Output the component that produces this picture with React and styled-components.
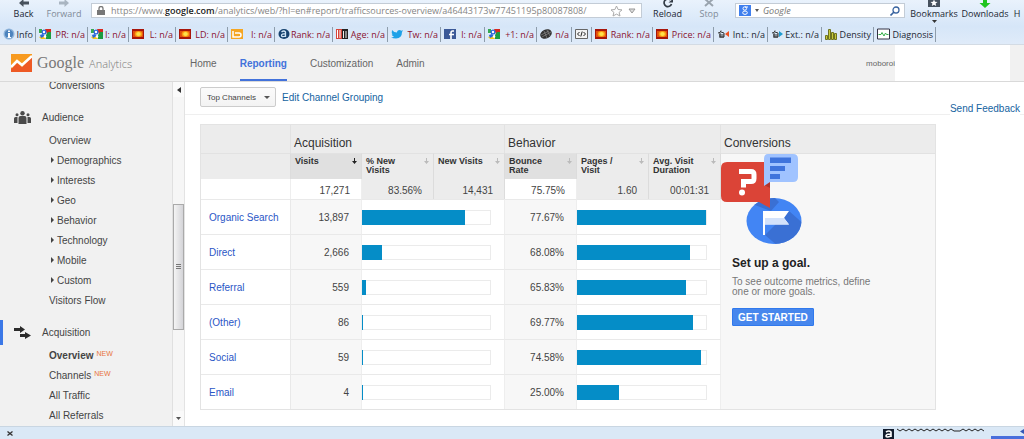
import React from 'react'
import styled, { createGlobalStyle } from 'styled-components'

const GlobalStyle = createGlobalStyle`
    * {
        box-sizing: border-box;
    }
    body {
        margin: 0;
        background: #ffffff;
        font-family: "Liberation Sans", Arial, sans-serif;
        font-size: 10px;
        color: #444444;
    }
    button, input, select {
        font-family: inherit;
        font-size: inherit;
        color: inherit;
        margin: 0;
        padding: 0;
        border: 0;
        background: none;
    }
    a {
        text-decoration: none;
        color: inherit;
    }
    ul {
        list-style: none;
        margin: 0;
        padding: 0;
    }
    svg {
        display: block;
        flex: none;
    }
`

const Page = styled.div`
    display: flex;
    flex-direction: column;
    min-height: 100vh;
    overflow: hidden;
`

/* browser chrome */

const Chrome = styled.div`
    background: linear-gradient(#e9f2fc, #d6e6f8 60%, #dfebf9);
    font-family: "Open Sans", "Noto Sans", sans-serif;
    font-size: 9px;
    color: #1c2733;
    border-bottom: 1px solid #d3dbe4;
`
const BrowserBar = styled.div`
    display: flex;
    align-items: flex-start;
    height: 24px;
    padding-left: 10px;
    overflow: hidden;
`
const BrowserButton = styled.button`
    display: flex;
    flex-direction: column;
    align-items: center;
    flex: none;
    width: ${props => props.$width}px;
    line-height: 12px;
    white-space: nowrap;
    color: ${props => props.$muted ? '#7f8b98' : '#1c2733'};
`
const AddressBox = styled.label`
    position: relative;
    display: flex;
    align-items: center;
    flex: 1;
    min-width: 0;
    height: 15px;
    margin: 3px 10px 0 0;
    padding: 0 5px 0 5px;
    background: #ffffff;
    border: 1px solid #c3ccd6;
`
const AddressText = styled.span`
    flex: 1;
    margin-left: 6px;
    color: #858585;
    line-height: 12px;
    white-space: nowrap;

    b {
        font-weight: 600;
        color: #222222;
    }
`
const AddressInput = styled.input`
    position: absolute;
    inset: 0;
    width: 100%;
    outline: none;
`
const SearchBox = styled.label`
    display: flex;
    align-items: center;
    gap: 4px;
    flex: none;
    width: 170px;
    height: 15px;
    margin: 3px 3px 0 0;
    padding: 0 4px 0 3px;
    background: #ffffff;
    border: 1px solid #c3ccd6;
`
const SearchInput = styled.input`
    flex: 1;
    min-width: 0;
    outline: none;

    &::placeholder {
        font-style: italic;
        color: #777777;
    }
`
const SeoBar = styled.ul`
    display: flex;
    height: 20px;
    align-items: center;
`
const SeoItem = styled.li`
    display: flex;
    align-items: center;
    justify-content: space-between;
    flex: none;
    width: ${props => props.$width}px;
    height: 15px;
    padding: 0 2px 0 3px;
    border-right: 1px solid #8d9cab;
    white-space: nowrap;
    color: ${props => props.$dark ? '#1c2733' : '#8a1230'};
`

/* analytics header */

const Header = styled.header`
    display: flex;
    align-items: stretch;
    height: 37px;
    background: #f1f1f1;
    border-bottom: 1px solid #d9d9d9;
`
const Brand = styled.a`
    display: flex;
    align-items: center;
    width: 178px;
    padding-left: 11px;
    color: #777777;
`
const BrandGoogle = styled.span`
    margin-left: 5px;
    font-family: "Liberation Serif", serif;
    font-size: 16px;
`
const BrandProduct = styled.span`
    margin-left: 5px;
    font-family: "Open Sans", sans-serif;
    font-weight: 300;
    font-size: 11px;
`
const MainNav = styled.nav`
    display: flex;
    flex: 1;
    gap: 23px;
    padding-left: 12px;
`
const NavLink = styled.a`
    display: flex;
    align-items: center;
    font-size: 10px;
    font-weight: ${props => props.$active ? 'bold' : 'normal'};
    color: ${props => props.$active ? '#4272db' : '#666666'};
    border-top: 2px solid transparent;
    border-bottom: 2px solid ${props => props.$active ? '#4272db' : 'transparent'};
`
const Account = styled.div`
    display: flex;
    align-items: center;
    font-size: 8px;
    color: #666666;
`
const AccountPanel = styled.div`
    align-self: stretch;
    width: 115px;
    margin-right: 14px;
    background: #ffffff;
`

/* body */

const Body = styled.div`
    display: flex;
    flex: 1;
`
const Sidebar = styled.nav`
    display: flex;
    width: 185px;
    flex: none;
    background: #f1f1f1;
    overflow: hidden;
    border-right: 1px solid #e3e3e3;
`
const SideList = styled.ul`
    flex: 1;
    margin-top: -7px;
`
const SideHeading = styled.li`
    display: flex;
    align-items: center;
    height: 25px;
    margin-top: 10px;
    padding-left: 11px;
    border-left: 3px solid ${props => props.$active ? '#3b78e7' : 'transparent'};

    svg {
        margin-right: 11px;
    }
`
const SideItem = styled.li`
    display: flex;
    align-items: center;
    height: 20px;
    padding-left: 49px;
    font-weight: ${props => props.$active ? 'bold' : 'normal'};

    svg {
        margin: 0 3px 0 2px;
    }
`
const NewTag = styled.sup`
    margin: 0 0 2px 3px;
    font-size: 7px;
    font-weight: normal;
    line-height: 8px;
    color: #e8743b;
`
const Scrollbar = styled.div`
    display: flex;
    flex-direction: column;
    justify-content: space-between;
    align-items: center;
    width: 12px;
    background: #f6f6f6;
    border-left: 1px solid #e0e0e0;
`
const ScrollButton = styled.button`
    display: flex;
    align-items: center;
    justify-content: center;
    width: 100%;
    height: 15px;
    background: #fafafa;
`
const ScrollTrack = styled.div`
    flex: 1;
    padding-top: 107px;
`
const ScrollThumb = styled.div`
    display: flex;
    align-items: center;
    justify-content: center;
    width: 11px;
    height: 126px;
    border: 1px solid #aaaaaa;
    background: linear-gradient(90deg, #f4f4f4, #d4d4d8);
`
const Main = styled.main`
    flex: 1;
    min-width: 0;
`
const Toolbar = styled.div`
    display: flex;
    align-items: center;
    height: 33px;
    gap: 6px;
    padding: 0 4px 2px 15px;
    border-bottom: 1px solid #efefef;
`
const SelectWrap = styled.label`
    display: flex;
    align-items: center;
    position: relative;

    svg {
        position: absolute;
        right: 6px;
        pointer-events: none;
    }
`
const Select = styled.select`
    appearance: none;
    width: 76px;
    height: 20px;
    padding-left: 6px;
    font-size: 8px;
    border: 1px solid #cccccc;
    border-radius: 2px;
    background: linear-gradient(#fbfbfb, #f3f3f3);
`
const TextLink = styled.a`
    color: #15639f;
`
const FeedbackLink = styled(TextLink)`
    align-self: flex-end;
    margin-left: auto;
    margin-bottom: -4px;
    background: #ffffff;
    line-height: 14px;
`

/* table */

const Report = styled.div`
    margin: 9px 88px 16px 15px;
`
const Table = styled.table`
    width: 100%;
    table-layout: fixed;
    border-collapse: separate;
    border-spacing: 0;
    border: 1px solid #e3e3e3;
`
const GroupCell = styled.th`
    height: 28px;
    padding: 8px 0 0 3px;
    background: #ececec;
    border-right: ${props => props.$divider ? '1px solid #e2e2e2' : '0'};
    text-align: left;
    font-size: 12px;
    line-height: 14px;
    font-weight: normal;
    color: #333333;
`
const HeadCell = styled.th`
    height: 26px;
    padding: 3px 4px 0 4px;
    vertical-align: top;
    text-align: left;
    font-size: 9px;
    line-height: 9px;
    color: #333333;
    background: ${props => props.$sorted ? '#e0e0e0' : '#ececec'};
    border-top: 1px solid #e2e2e2;
    border-right: 1px solid #dcdcdc;
`
const HeadContent = styled.div`
    display: flex;
    justify-content: space-between;
    gap: 10px;
`
const SortButton = styled.button`
    align-self: flex-start;
    padding-top: 1px;
    color: ${props => props.$on ? '#222222' : '#bbbbbb'};
`
const TotalCell = styled.td`
    height: 20px;
    padding: 4px 11px 0 0;
    text-align: right;
    line-height: 12px;
    background: ${props => props.$plain ? '#ffffff' : '#ececec'};
    border-right: 1px solid ${props => props.$plain ? '#eeeeee' : '#dcdcdc'};
`
const Cell = styled.td`
    height: 35px;
    padding: 0 ${props => props.$bar ? 13 : 12}px 0 0;
    text-align: right;
    background: ${props => props.$shade ? '#f7f7f7' : '#ffffff'};
    border-top: 1px solid #e9e9e9;
    border-right: 1px solid #eeeeee;
`
const ChannelCell = styled.th`
    padding: 0 0 0 8px;
    text-align: left;
    font-weight: normal;
    color: #2a56c6;
    border-top: 1px solid #e9e9e9;
    border-right: 1px solid #e9e9e9;
`
const BarTrack = styled.div`
    height: 15px;
    border: 1px solid #ebebeb;
    border-left: 0;
`
const BarFill = styled.div`
    height: 15px;
    min-width: 1px;
    margin-top: -1px;
    background: #058dc7;
`
const GoalCell = styled.td`
    padding: 0;
    vertical-align: top;
    background: #f7f7f7;
    border-top: 1px solid #e2e2e2;
`
const GoalText = styled.div`
    padding: 10px 11px 0;

    h2 {
        margin: 0;
        font-size: 12px;
        line-height: 16px;
        color: #222222;
    }
    p {
        max-width: 150px;
        margin: 6px 0 11px;
        line-height: 10px;
        color: #777777;
    }
`
const StartButton = styled.button`
    height: 18px;
    padding: 0 5px;
    border: 1px solid #3079ed;
    border-radius: 1px;
    background: #4787ed;
    color: #ffffff;
    font-weight: bold;
    white-space: nowrap;
`
const StatusBar = styled.footer`
    display: flex;
    align-items: center;
    justify-content: space-between;
    height: 13px;
    padding-left: 7px;
    background: #dae8f6;
    border-top: 1px solid #c9d6e2;
    overflow: hidden;
`

const SEO_ITEMS = [
    { icon: 'info', text: 'Info', width: 36, dark: true },
    { icon: 'google', text: 'PR: n/a', width: 52 },
    { icon: 'google', text: 'I: n/a', width: 41 },
    { icon: 'sun', text: 'L: n/a', width: 47 },
    { icon: 'sun', text: 'LD: n/a', width: 52 },
    { icon: 'bing', text: 'I: n/a', width: 47 },
    { icon: 'alexa', text: 'Rank: n/a', width: 58 },
    { icon: 'archive', text: 'Age: n/a', width: 55 },
    { icon: 'twitter', text: 'Tw: n/a', width: 53 },
    { icon: 'facebook', text: 'l: n/a', width: 44 },
    { icon: 'google', text: '+1: n/a', width: 52 },
    { icon: 'ball', text: 'n/a', width: 35 },
    { icon: 'code', text: '', width: 20 },
    { icon: 'sun', text: 'Rank: n/a', width: 61 },
    { icon: 'sun', text: 'Price: n/a', width: 61 },
    { icon: 'linkIn', text: 'Int.: n/a', width: 54, dark: true },
    { icon: 'linkOut', text: 'Ext.: n/a', width: 54, dark: true },
    { icon: 'density', text: 'Density', width: 52, dark: true },
    { icon: 'pulse', text: 'Diagnosis', width: 62, dark: true }
]

const HEADINGS = [
    { text: 'Visits', sorted: true, on: true },
    { text: '% New Visits' },
    { text: 'New Visits' },
    { text: 'Bounce Rate', sorted: true },
    { text: 'Pages / Visit' },
    { text: 'Avg. Visit Duration' }
]

const CHANNELS = [
    { name: 'Organic Search', visits: 13897, bounce: 77.67 },
    { name: 'Direct', visits: 2666, bounce: 68.08 },
    { name: 'Referral', visits: 559, bounce: 65.83 },
    { name: '(Other)', visits: 86, bounce: 69.77 },
    { name: 'Social', visits: 59, bounce: 74.58 },
    { name: 'Email', visits: 4, bounce: 25 }
]
const TOTAL_VISITS = 17271
const MAX_BOUNCE = 77.67

const SEO_SHAPES = {
    info: <>
        <circle cx="6" cy="6" r="5.500" fill="#8fb4da" />
        <circle cx="6" cy="6" r="4.200" fill="#4d84be" />
        <path d="M5 5h2v4h1v1H4.500V9H5V6zM5 2.500h2v1.500H5z" fill="#fff" />
    </>,
    google: <>
        <path d="M0 1h6v5H0z" fill="#e9f3ff" />
        <path d="M6 1h6v5H8z" fill="#d8291f" />
        <path d="M9 4h3v7H7V7z" fill="#1c9c41" />
        <path d="M0 1h3v4H0z" fill="#36a852" />
        <path d="M0 9l5-2 2 4H2z" fill="#f5c51f" />
        <path d="M1 7l3-1 2 2-4 2z" fill="#2a66d8" />
        <circle cx="5" cy="4" r="2.500" fill="#2a66d8" />
        <circle cx="5" cy="4" r="1.200" fill="#fff" />
        <circle cx="6" cy="8.500" r="1.300" fill="#fff" />
    </>,
    sun: <>
        <path d="M0 1h12v10H0z" fill="#a8160b" />
        <path d="M1 3h10v6H1z" fill="#e2500f" />
        <ellipse cx="6.500" cy="6" rx="3.800" ry="3" fill="#fb9a12" />
        <ellipse cx="6.500" cy="6" rx="2.300" ry="2" fill="#ffe24a" />
    </>,
    bing: <>
        <path d="M0 1h12v10H0z" fill="#f5a623" />
        <path d="M2 3v6h6a2 2 0 0 0 0-4H4" fill="none" stroke="#fff" strokeWidth="1.500" />
    </>,
    alexa: <>
        <ellipse cx="6" cy="6" rx="5.500" ry="5" fill="#16426f" />
        <path d="M3.500 4q2.500-2 4 0v5M7.500 6q-4-.5-4 1.500t4 .5" fill="none" stroke="#cfe4f5" strokeWidth="1.300" />
    </>,
    archive: <>
        <path d="M0 1h6v10H0z" fill="#d6453a" />
        <path d="M1.500 2v8M4 2v8" stroke="#fff" />
        <path d="M6 1h6v10H6z" fill="#222" />
        <path d="M7.500 3v7M10 3v7" stroke="#eee" />
    </>,
    twitter: <path d="M1 2q2 2.500 5 2.500Q6 2 8.500 2q1 0 1.700.7L12 2.200 11 4q0 6-6 6.500Q2 10.500 0 9.500q2 0 3-1-2-.5-2.300-2h1Q.2 5 1 2z" fill="#1da1e8" />,
    facebook: <>
        <path d="M0 1h12v10H0z" fill="#3b5998" />
        <path d="M10 3H8.500Q7 3 7 5v6M5 6.500h5" fill="none" stroke="#fff" strokeWidth="1.600" />
    </>,
    ball: <>
        <ellipse cx="6" cy="6" rx="6" ry="4.500" transform="rotate(-25 6 6)" fill="#333" />
        <path d="M1 7l8-4M2 9l9-5M4 3l3 7M7 2l3 6" stroke="#999" strokeWidth=".6" />
    </>,
    code: <>
        <path d="M.5 1.500h12v9H.500z" fill="#f3f3f3" stroke="#666" />
        <path d="M4.500 4L2.500 6l2 2M8.500 4l2 2-2 2M7.200 3.500L5.800 8.500" fill="none" stroke="#222" />
    </>,
    linkIn: <>
        <path d="M1 5q3 0 3-2.500M3 5v4h4V5L4 4M2 7h5M2 9h5" fill="none" stroke="#333" />
        <path d="M12 3v6L8 6z" fill="#f0501e" />
    </>,
    linkOut: <>
        <path d="M1 5q3 0 3-2.500M3 5v4h4V5L4 4M2 7h5M2 9h5" fill="none" stroke="#333" />
        <path d="M8 3v6l4-3z" fill="#1e9bd0" />
    </>,
    density: <path d="M.5 7.500h2v4h-2zM3.500 1.500h2v10h-2zM6.500 4.500h2v7h-2zM9.500 5.500h2v6h-2z" fill="#c7c93c" stroke="#6f7420" />,
    pulse: <>
        <path d="M.5 1h12v10H.500z" fill="#fff" stroke="#334" />
        <path d="M1.500 6.500H4l1-2 2 3.500 1.500-3 1 1.500h2" fill="none" stroke="#36b04a" />
    </>
}

function SeoIcon ({ name }) {
    return (
        <svg width="13" height="12" viewBox="0 0 13 12" aria-hidden="true">{SEO_SHAPES[name]}</svg>
    )
}

function Caret ({ size = 6, color = '#555555' }) {
    return (
        <svg width={size} height="3" viewBox="0 0 6 3" preserveAspectRatio="none" aria-hidden="true">
            <path d="M0 0h6L3 3z" fill={color} />
        </svg>
    )
}

function BrowserChrome () {
    return (
        <Chrome>
            <BrowserBar>
                <BrowserButton $width={27}>
                    <svg width="10" height="8" viewBox="0 0 10 8"><path d="M10 1.500H4.500V-1L0 3l4.500 4V4.500H10z" fill="#48525d" /></svg>
                    Back
                </BrowserButton>
                <BrowserButton $width={54} $muted>
                    <svg width="10" height="8" viewBox="0 0 10 8"><path d="M0 1.500h5.500V-1L10 3 5.500 7V4.500H0z" fill="#a9b5c1" /></svg>
                    Forward
                </BrowserButton>
                <AddressBox>
                    <svg width="8" height="9" viewBox="0 0 8 9">
                        <path d="M2 4V2.500a2 2 0 0 1 4 0V4" fill="none" stroke="#777" strokeWidth="1.300" />
                        <path d="M0 4h8v5H0z" fill="#777" />
                    </svg>
                    <AddressText>
                        https://www.<b>google.com</b>/analytics/web/?hl=en#report/trafficsources-overview/a46443173w77451195p80087808/
                    </AddressText>
                    <svg width="26" height="12" viewBox="0 0 26 12">
                        <path d="M6.500 1l1.600 3.500 3.900.4-2.900 2.500.9 3.600-3.500-1.900L3 11l.9-3.600L1 4.900l3.900-.4z" fill="none" stroke="#aaa" />
                        <path d="M19 4h6l-3 4z" fill="#ddd" stroke="#999" />
                    </svg>
                    <AddressInput type="text" aria-label="Address" />
                </AddressBox>
                <BrowserButton $width={31}>
                    <svg width="10" height="8" viewBox="0 0 10 8">
                        <path d="M7.500 0A3.800 3.800 0 1 0 8.500 4" fill="none" stroke="#333c46" strokeWidth="1.700" />
                        <path d="M5.500 2.500H10V-1z" fill="#333c46" />
                    </svg>
                    Reload
                </BrowserButton>
                <BrowserButton $width={52} $muted>
                    <svg width="10" height="8" viewBox="0 0 10 8"><path d="M1-1l8 7M9-1L1 6" stroke="#9aa4ae" strokeWidth="2" /></svg>
                    Stop
                </BrowserButton>
                <SearchBox>
                    <svg width="12" height="11" viewBox="0 0 12 11">
                        <path d="M0 0h12v11H0z" fill="#3f7fee" />
                        <ellipse cx="5.800" cy="3.500" rx="1.800" ry="1.700" fill="none" stroke="#fff" />
                        <ellipse cx="6" cy="7.700" rx="2.300" ry="1.700" fill="none" stroke="#fff" />
                        <path d="M6 2h3" stroke="#fff" />
                    </svg>
                    <Caret size={4} />
                    <SearchInput type="text" placeholder="Google" aria-label="Search" />
                    <svg width="10" height="10" viewBox="0 0 10 10">
                        <circle cx="6" cy="4" r="3" fill="none" stroke="#38639f" strokeWidth="1.300" />
                        <path d="M4 6L.5 9.500" stroke="#38639f" strokeWidth="1.600" />
                    </svg>
                </SearchBox>
                <BrowserButton $width={52}>
                    <svg width="12" height="8" viewBox="0 0 12 8">
                        <path d="M0 0h12v7H0z" fill="#47525e" />
                        <path d="M6-.5l1 2.300 2.500.2-1.900 1.600.6 2.400L6 4.700 3.800 6l.6-2.400L2.500 2 5 1.800z" fill="#fff" />
                    </svg>
                    Bookmarks
                    <Caret size={5} color="#333333" />
                </BrowserButton>
                <BrowserButton $width={50}>
                    <svg width="12" height="8" viewBox="0 0 12 8"><path d="M4 0h4v3h3.500L6 8 .5 3H4z" fill="#1fc41f" /></svg>
                    Downloads
                </BrowserButton>
                <BrowserButton $width={14}>
                    <svg width="10" height="8" />
                    H
                </BrowserButton>
            </BrowserBar>
            <SeoBar>
                {SEO_ITEMS.map((item, i) => (
                    <SeoItem key={i} $width={item.width} $dark={item.dark}>
                        <SeoIcon name={item.icon} />
                        {item.text && <span>{item.text}</span>}
                    </SeoItem>
                ))}
            </SeoBar>
        </Chrome>
    )
}

function ExpandItem ({ children }) {
    return (
        <SideItem>
            <svg width="3" height="6" viewBox="0 0 3 6"><path d="M0 0l3 3-3 3z" fill="#444" /></svg>
            <a href="#report">{children}</a>
        </SideItem>
    )
}

function SideNav () {
    return (
        <Sidebar>
            <SideList>
                <SideItem><a href="#conversions">Conversions</a></SideItem>
                <SideHeading>
                    <svg width="17" height="13" viewBox="0 0 17 13" fill="#4a4a4a">
                        <circle cx="8.500" cy="2.200" r="2.200" />
                        <circle cx="3" cy="3.800" r="1.500" />
                        <circle cx="14" cy="3.800" r="1.500" />
                        <path d="M4.500 13V7q0-2 2-2h4q2 0 2 2v6zM0 12V7.500Q0 6 1.500 6h2v6zM17 12V7.500Q17 6 15.500 6h-2v6z" />
                    </svg>
                    Audience
                </SideHeading>
                <SideItem><a href="#overview">Overview</a></SideItem>
                <li>
                    <ul>
                        {['Demographics', 'Interests', 'Geo', 'Behavior', 'Technology', 'Mobile', 'Custom'].map(name => (
                            <ExpandItem key={name}>{name}</ExpandItem>
                        ))}
                    </ul>
                </li>
                <SideItem><a href="#flow">Visitors Flow</a></SideItem>
                <SideHeading $active>
                    <svg width="17" height="13" viewBox="0 0 17 13" fill="#2b2b2b">
                        <path d="M0 2h6V0l5 3.500L6 7V5H0zM6 8h5V6l6 3.500-6 3.500v-2H6z" />
                    </svg>
                    Acquisition
                </SideHeading>
                <SideItem $active><a href="#acquisition">Overview</a><NewTag>NEW</NewTag></SideItem>
                <SideItem><a href="#channels">Channels</a><NewTag>NEW</NewTag></SideItem>
                <SideItem><a href="#traffic">All Traffic</a></SideItem>
                <SideItem><a href="#referrals">All Referrals</a></SideItem>
            </SideList>
            <Scrollbar>
                <ScrollButton aria-label="Collapse navigation">
                    <svg width="4" height="6" viewBox="0 0 4 6"><path d="M4 0v6L0 3z" fill="#333" /></svg>
                </ScrollButton>
                <ScrollTrack>
                    <ScrollThumb>
                        <svg width="5" height="6" viewBox="0 0 5 6"><path d="M0 .5h5M0 2.500h5M0 4.500h5" stroke="#777" /></svg>
                    </ScrollThumb>
                </ScrollTrack>
                <ScrollButton aria-label="Scroll down"><Caret size={5} /></ScrollButton>
            </Scrollbar>
        </Sidebar>
    )
}

function GoalArt () {
    return (
        <svg width="84" height="91" viewBox="0 0 84 91" aria-hidden="true">
            <defs>
                <clipPath id="disc"><ellipse cx="53" cy="67" rx="27.500" ry="23" /></clipPath>
            </defs>
            <ellipse cx="53" cy="67" rx="27.500" ry="23" fill="#4285f4" />
            <path d="M44 81l24-24 16 14v22H58z M26 48l24-8 8 8-8 9z" fill="#3a70d4" clipPath="url(#disc)" />
            <path d="M42 57h26l-5 7 5 6.500H44V81h-2z" fill="#ffffff" />
            <path d="M44 64h19l5 6.500H44z" fill="#d3e2fb" />
            <path d="M6 8h43v46L38 48H6q-6 0-6-6V14q0-6 6-6z" fill="#db4437" />
            <path d="M43 31l6-5v8z" fill="#b5332a" />
            <path d="M18 17.500h12q3 0 3 3v4q0 3-3 3h-7.500v6" fill="none" stroke="#fff" strokeWidth="5" />
            <circle cx="21" cy="38.500" r="3" fill="#fff" />
            <path d="M47 0h25q5 0 5 5v18q0 5-5 5H49l-6 4V5q0-5 4-5z" fill="#a0c3ff" />
            <path d="M49 3.500h21V9H49zM49 12h15v5H49zM49 20h10v5H49z" fill="#3f74dc" />
        </svg>
    )
}

const Col = styled.col`
    width: ${props => props.$width}px;
`

function ReportTable () {
    return (
        <Table>
            <colgroup>
                <Col $width={90} />
                <Col $width={71} />
                <Col $width={72} />
                <Col $width={71} />
                <Col $width={72} />
                <Col $width={72} />
                <Col $width={72} />
                <col />
            </colgroup>
            <tbody>
                <tr>
                    <GroupCell as="td" $divider />
                    <GroupCell colSpan={3} $divider>Acquisition</GroupCell>
                    <GroupCell colSpan={3} $divider>Behavior</GroupCell>
                    <GroupCell>Conversions</GroupCell>
                </tr>
                <tr>
                    <HeadCell as="td" />
                    {HEADINGS.map(heading => (
                        <HeadCell key={heading.text} $sorted={heading.sorted}>
                            <HeadContent>
                                {heading.text}
                                <SortButton $on={heading.on} aria-label={'Sort by ' + heading.text}>
                                    <svg width="5" height="6" viewBox="0 0 5 6">
                                        <path d="M2 0h1v3h2L2.500 6 0 3h2z" fill="currentColor" />
                                    </svg>
                                </SortButton>
                            </HeadContent>
                        </HeadCell>
                    ))}
                    <GoalCell rowSpan={CHANNELS.length + 2}>
                        <GoalArt />
                        <GoalText>
                            <h2>Set up a goal.</h2>
                            <p>To see outcome metrics, define one or more goals.</p>
                            <StartButton>GET STARTED</StartButton>
                        </GoalText>
                    </GoalCell>
                </tr>
                <tr>
                    <TotalCell $plain />
                    <TotalCell $plain>17,271</TotalCell>
                    <TotalCell>83.56%</TotalCell>
                    <TotalCell>14,431</TotalCell>
                    <TotalCell $plain>75.75%</TotalCell>
                    <TotalCell>1.60</TotalCell>
                    <TotalCell>00:01:31</TotalCell>
                </tr>
                {CHANNELS.map(channel => (
                    <tr key={channel.name}>
                        <ChannelCell scope="row"><a href="#channel">{channel.name}</a></ChannelCell>
                        <Cell $shade>{channel.visits.toLocaleString('en-US')}</Cell>
                        <Cell $bar colSpan={2}>
                            <BarTrack><BarFill style={{ width: (channel.visits / TOTAL_VISITS * 100) + '%' }} /></BarTrack>
                        </Cell>
                        <Cell $shade>{channel.bounce.toFixed(2)}%</Cell>
                        <Cell $bar colSpan={2}>
                            <BarTrack><BarFill style={{ width: (channel.bounce / MAX_BOUNCE * 100) + '%' }} /></BarTrack>
                        </Cell>
                    </tr>
                ))}
            </tbody>
        </Table>
    )
}

export default function App () {
    return (
        <Page>
            <GlobalStyle />
            <BrowserChrome />
            <Header>
                <Brand href="#home">
                    <svg width="21" height="18" viewBox="0 0 21 18">
                        <path d="M0 0h21v18H0z" fill="#f79a1f" />
                        <path d="M0 15l6-6 5 4L21 3v15H0z" fill="#ee5a24" />
                        <path d="M0 13l6-6 5 4 10-9" fill="none" stroke="#fff" strokeWidth="2.500" />
                    </svg>
                    <BrandGoogle>Google</BrandGoogle>
                    <BrandProduct>Analytics</BrandProduct>
                </Brand>
                <MainNav>
                    <NavLink href="#home">Home</NavLink>
                    <NavLink href="#reporting" $active>Reporting</NavLink>
                    <NavLink href="#customization">Customization</NavLink>
                    <NavLink href="#admin">Admin</NavLink>
                </MainNav>
                <Account>
                    moboroi
                    <AccountPanel />
                </Account>
            </Header>
            <Body>
                <SideNav />
                <Main>
                    <Toolbar>
                        <SelectWrap>
                            <Select aria-label="Channel grouping" defaultValue="top">
                                <option value="top">Top Channels</option>
                            </Select>
                            <Caret />
                        </SelectWrap>
                        <TextLink href="#edit">Edit Channel Grouping</TextLink>
                        <FeedbackLink href="#feedback">Send Feedback</FeedbackLink>
                    </Toolbar>
                    <Report>
                        <ReportTable />
                    </Report>
                </Main>
            </Body>
            <StatusBar>
                <button aria-label="Close status bar">
                    <svg width="6" height="5" viewBox="0 0 6 5"><path d="M.5.5l5 4M5.500.5l-5 4" stroke="#333" strokeWidth="1.300" /></svg>
                </button>
                <svg width="141" height="12" viewBox="0 0 141 12">
                    <path d="M0 2h11v10H0z" fill="#111b2c" />
                    <path d="M3 5q3-2 5 0v5M8 7q-5 0-5 2t5 0" fill="none" stroke="#fff" strokeWidth="1.600" />
                    <path d="M14 2l3 2 3-2 3 2 3-2 3 2 3-2 3 2 3-2 3 2 3-2 3 2 3-2 3 2 3-2 3 2 3-2 3 2 3-2 3 2 6 0 3-2 3 2 3-2 3 2 3-2 3 2 3-2 3 2" fill="none" stroke="#222" />
                    <path d="M108 9h33v3h-33z" fill="#4a6fdc" />
                    <path d="M141 2v5l-4-2.500z" fill="#3456b5" />
                </svg>
            </StatusBar>
        </Page>
    )
}
